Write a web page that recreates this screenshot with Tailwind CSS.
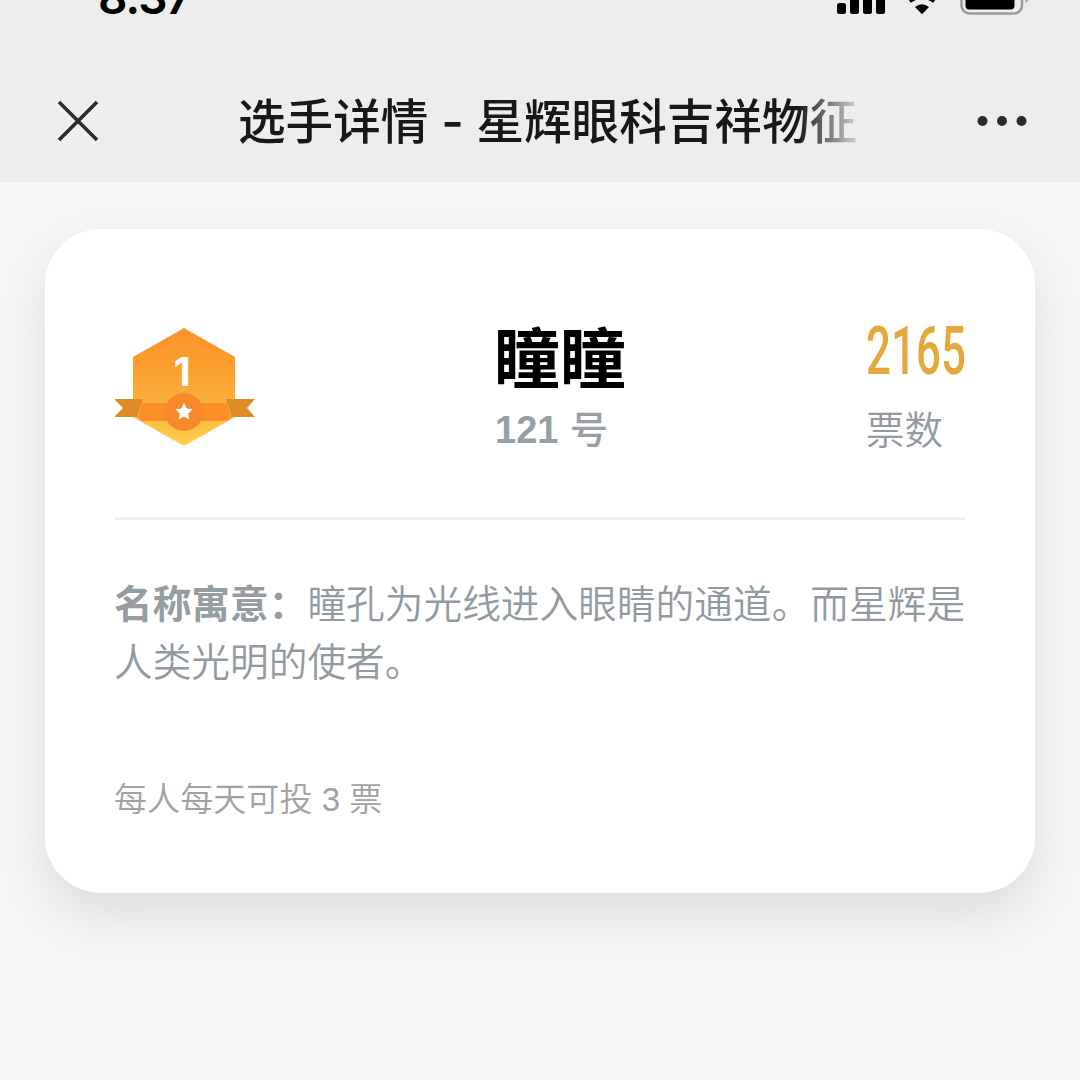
<!DOCTYPE html>
<html lang="zh-CN">
<head>
<meta charset="utf-8">
<title>选手详情</title>
<script src="https://cdn.jsdelivr.net/npm/@tailwindcss/browser@4"></script>
</head>
<body class="h-[1080px] w-[1080px] overflow-hidden bg-[#f6f6f6] font-['Liberation_Sans','Noto_Sans_CJK_SC',sans-serif]">
<header class="flex h-[182px] flex-col bg-[#ededed]">
  <div class="flex h-[60px] items-start justify-between pr-[49px] pl-[98px]">
    <span class="-mt-[33px] h-[60px] font-['Inter',sans-serif] text-[46px] leading-[60px] font-semibold tracking-[-1.9px] text-black">8:37</span>
    <svg class="h-5 w-[194px]" viewBox="837 0 194 20" aria-hidden="true">
      <rect x="837" y="3" width="9" height="11" rx="2.5"/>
      <rect x="850" y="-5" width="9" height="19" rx="2.5"/>
      <rect x="863" y="-10" width="9" height="24" rx="2.5"/>
      <rect x="876" y="-15" width="9" height="29" rx="2.5"/>
      <path d="M922 14.300l-7-7.300q7-5.400 14 0z"/>
      <path d="M909.500 1q12.500-9 25 0" fill="none" stroke="#000" stroke-width="4.500"/>
      <rect x="961.500" y="-14" width="60.500" height="27.500" rx="8" fill="none" stroke="#9a9a9a" stroke-width="2.500"/>
      <rect x="965.500" y="-10" width="49" height="19.500" rx="4"/>
      <path d="M1025.500-6v9q3-1.500 3-6z" fill="#9a9a9a"/>
    </svg>
  </div>
  <div class="flex h-[122px] items-center pr-[53px] pl-[57px]">
    <svg class="h-[42px] w-[42px]" viewBox="0 0 42 42" fill="none" stroke="#2b2b2b" stroke-width="3.600" aria-hidden="true"><path d="M2 2l38 38M40 2L2 40"/></svg>
    <h1 class="ml-[139px] w-[622px] overflow-hidden bg-linear-to-r from-[#181818] from-[90%] to-transparent to-[101%] bg-clip-text pt-[3px] text-[47.6px] leading-[72px] font-medium whitespace-nowrap text-transparent">选手详情<span class="inline-block w-[48px] text-center font-['Inter',sans-serif] text-[#181818]">-</span>星辉眼科吉祥物征</h1>
    <svg class="ml-auto h-[12px] w-[50px]" viewBox="0 0 50 12" fill="#2b2b2b" aria-hidden="true"><circle cx="5.500" cy="6" r="5"/><circle cx="25" cy="6" r="5"/><circle cx="44.500" cy="6" r="5"/></svg>
  </div>
</header>
<main class="px-[45px] pt-[47px]">
  <section class="h-[664px] rounded-[56px] bg-white px-[70px] pt-[90px] shadow-[0_23px_54px_rgba(0,0,0,0.105)]">
    <div class="flex h-[201px] items-start border-b-[3px] border-[#f0f0f0]">
      <svg class="mt-[5px] h-[124px] w-[142px] shrink-0" viewBox="0 0 142 124" aria-hidden="true">
        <defs>
          <linearGradient id="hex" x1="0" y1="0" x2="0" y2="1"><stop offset="0" stop-color="#fa942a"/><stop offset=".3" stop-color="#fb9d2d"/><stop offset=".65" stop-color="#fcb03c"/><stop offset="1" stop-color="#fdd04b"/></linearGradient>
        </defs>
        <path d="M69 4l51 29v60l-51 29L18 93V33z" fill="url(#hex)"/>
        <path d="M-1 75h29l-5 15v3H-1l9-9zM140 75h-29l5 15v3h24l-8-9z" fill="#de8a25"/>
        <path d="M27 79h85l4 14-4 4H27l-4-4z" fill="#fa8f29"/>
        <circle cx="69" cy="88" r="19" fill="#f8892a"/>
        <path d="M69 78.800l2.600 5.700 6.200.7-4.600 4.200 1.200 6.200-5.400-3.100-5.400 3.100 1.200-6.200-4.600-4.200 6.200-.7z" fill="#fff"/>
        <text x="67" y="61.500" text-anchor="middle" fill="#fff" font-family="Inter" font-size="40" font-weight="700">1</text>
      </svg>
      <div class="ml-[237px] h-[130px] w-[132px] shrink-0">
        <h2 class="h-[78px] pt-[2px] text-[66px] leading-[78px] font-bold whitespace-nowrap text-black">瞳瞳</h2>
        <p class="mt-[5px] h-[56px] pl-px text-[38px] leading-[56px] font-bold whitespace-nowrap text-[#979fa6]">121 <span class="ml-px font-medium">号</span></p>
      </div>
      <div class="ml-auto h-[130px] w-[99px] shrink-0">
        <svg class="h-[78px] w-[99px] overflow-visible" viewBox="0 0 99 78" aria-hidden="true"><text x="0" y="54.500" fill="#e5a83c" font-family="Roboto" font-weight="500" font-size="66" textLength="100" lengthAdjust="spacingAndGlyphs">2165</text></svg>
        <p class="mt-[6px] h-[56px] text-[38.5px] leading-[56px] font-[350] text-[#909a9f]">票数</p>
      </div>
    </div>
    <p class="mt-[56px] w-[860px] -ml-px text-[38.7px] leading-[58px] font-[350] text-[#909a9f]"><b class="font-bold text-[#959da2]">名称寓意：</b>瞳孔为光线进入眼睛的通道。而星辉是<br>人类光明的使者。</p>
    <p class="mt-[84px] -ml-px text-[33.1px] leading-[48px] font-[350] text-[#a2a2a2]">每人每天可投 3 票</p>
  </section>
</main>
</body>
</html>
